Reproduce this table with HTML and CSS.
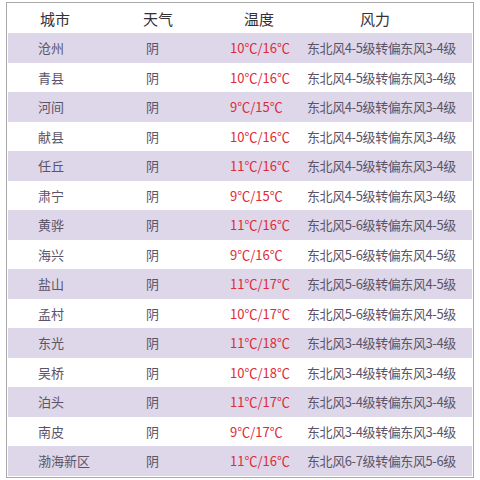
FILE: index.html
```html
<!DOCTYPE html>
<html lang="zh-CN">
<head>
<meta charset="utf-8">
<link rel="stylesheet" href="styles.css">
</head>
<body>
<div class="frame">
  <div class="table">
    <div class="row head">
      <div class="c1">城市</div><div class="c2">天气</div><div class="c3">温度</div><div class="c4">风力</div>
    </div>
    <div class="row alt"><div class="c1">沧州</div><div class="c2">阴</div><div class="c3 t">10℃/16℃</div><div class="c4">东北风4-5级转偏东风3-4级</div></div>
    <div class="row"><div class="c1">青县</div><div class="c2">阴</div><div class="c3 t">10℃/16℃</div><div class="c4">东北风4-5级转偏东风3-4级</div></div>
    <div class="row alt"><div class="c1">河间</div><div class="c2">阴</div><div class="c3 t">9℃/15℃</div><div class="c4">东北风4-5级转偏东风3-4级</div></div>
    <div class="row"><div class="c1">献县</div><div class="c2">阴</div><div class="c3 t">10℃/16℃</div><div class="c4">东北风4-5级转偏东风3-4级</div></div>
    <div class="row alt"><div class="c1">任丘</div><div class="c2">阴</div><div class="c3 t">11℃/16℃</div><div class="c4">东北风4-5级转偏东风3-4级</div></div>
    <div class="row"><div class="c1">肃宁</div><div class="c2">阴</div><div class="c3 t">9℃/15℃</div><div class="c4">东北风4-5级转偏东风3-4级</div></div>
    <div class="row alt"><div class="c1">黄骅</div><div class="c2">阴</div><div class="c3 t">11℃/16℃</div><div class="c4">东北风5-6级转偏东风4-5级</div></div>
    <div class="row"><div class="c1">海兴</div><div class="c2">阴</div><div class="c3 t">9℃/16℃</div><div class="c4">东北风5-6级转偏东风4-5级</div></div>
    <div class="row alt"><div class="c1">盐山</div><div class="c2">阴</div><div class="c3 t">11℃/17℃</div><div class="c4">东北风5-6级转偏东风4-5级</div></div>
    <div class="row"><div class="c1">孟村</div><div class="c2">阴</div><div class="c3 t">10℃/17℃</div><div class="c4">东北风5-6级转偏东风4-5级</div></div>
    <div class="row alt"><div class="c1">东光</div><div class="c2">阴</div><div class="c3 t">11℃/18℃</div><div class="c4">东北风3-4级转偏东风3-4级</div></div>
    <div class="row"><div class="c1">吴桥</div><div class="c2">阴</div><div class="c3 t">10℃/18℃</div><div class="c4">东北风3-4级转偏东风3-4级</div></div>
    <div class="row alt"><div class="c1">泊头</div><div class="c2">阴</div><div class="c3 t">11℃/17℃</div><div class="c4">东北风3-4级转偏东风3-4级</div></div>
    <div class="row"><div class="c1">南皮</div><div class="c2">阴</div><div class="c3 t">9℃/17℃</div><div class="c4">东北风3-4级转偏东风3-4级</div></div>
    <div class="row alt"><div class="c1">渤海新区</div><div class="c2">阴</div><div class="c3 t">11℃/16℃</div><div class="c4">东北风6-7级转偏东风5-6级</div></div>
  </div>
</div>
</body>
</html>
```

FILE: styles.css
```css
html, body {
  margin: 0;
  padding: 0;
  background: #ffffff;
}
body {
  width: 480px;
  height: 480px;
  padding: 2px 6px 2px 6px;
  box-sizing: border-box;
  font-family: "Noto Sans CJK SC", "Noto Sans", sans-serif;
  font-size: 13px;
  color: #5b5468;
}
.frame {
  height: 476px;
  border: 1px solid #a9a9a9;
  box-sizing: border-box;
  padding: 0 1px 3px 1px;
  display: flex;
  flex-direction: column;
}
.table {
  display: flex;
  flex-direction: column;
}
.row {
  display: grid;
  grid-template-columns: 127px 85px 77px 1fr;
  height: 29.5px;
  align-items: center;
  line-height: 1;
}
.row.head {
  height: 30px;
  font-size: 15px;
  color: #333036;
}
.row.alt {
  background: #ddd7e9;
}
.c1 { padding-left: 30px; }
.c2 { padding-left: 11px; }
.c3 { padding-left: 10px; }
.c4 {
  padding-left: 10px;
  white-space: nowrap;
  letter-spacing: -0.4px;
}
.head .c1 { padding-left: 32px; }
.head .c2 { padding-left: 8px; }
.head .c3 { padding-left: 24px; }
.head .c4 { padding-left: 63px; letter-spacing: 0; }
.t {
  color: #e02a38;
}
```
